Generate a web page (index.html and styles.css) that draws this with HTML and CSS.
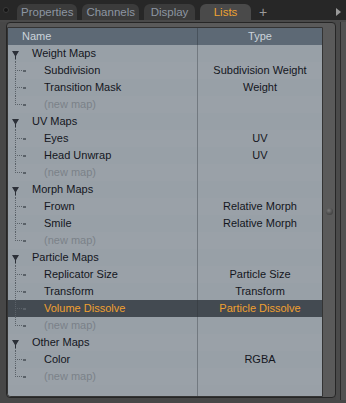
FILE: index.html
```html
<!DOCTYPE html>
<html>
<head>
<meta charset="utf-8">
<link rel="stylesheet" href="styles.css">
</head>
<body>
<div class="app">
  <div class="tabbar">
    <span class="knob"></span>
    <div class="tab">Properties</div>
    <div class="tab">Channels</div>
    <div class="tab">Display</div>
    <div class="tab active">Lists</div>
    <span class="plus">+</span>
    <span class="spacer"></span>
    <svg class="arrow" width="6" height="8" viewBox="0 0 6 8"><path d="M0 0 L5 4 L0 8 Z" fill="#9a9a9a"/></svg>
  </div>
  <div class="band"></div>
  <div class="main">
    <div class="frame">
      <div class="list">
        <div class="row head"><div class="c1">Name</div><div class="c2">Type</div></div>

        <div class="row group"><div class="c1"><span class="tree"><svg class="tri" width="7" height="11" viewBox="0 0 7 11"><path d="M0 3 H7 L4 8 V11 H3 V8 Z" fill="#2c3038"/></svg></span>Weight Maps</div><div class="c2"></div></div>
        <div class="row child"><div class="c1"><span class="tree"></span>Subdivision</div><div class="c2">Subdivision Weight</div></div>
        <div class="row child"><div class="c1"><span class="tree"></span>Transition Mask</div><div class="c2">Weight</div></div>
        <div class="row child last new"><div class="c1"><span class="tree"></span>(new map)</div><div class="c2"></div></div>

        <div class="row group"><div class="c1"><span class="tree"><svg class="tri" width="7" height="11" viewBox="0 0 7 11"><path d="M0 3 H7 L4 8 V11 H3 V8 Z" fill="#2c3038"/></svg></span>UV Maps</div><div class="c2"></div></div>
        <div class="row child"><div class="c1"><span class="tree"></span>Eyes</div><div class="c2">UV</div></div>
        <div class="row child"><div class="c1"><span class="tree"></span>Head Unwrap</div><div class="c2">UV</div></div>
        <div class="row child last new"><div class="c1"><span class="tree"></span>(new map)</div><div class="c2"></div></div>

        <div class="row group"><div class="c1"><span class="tree"><svg class="tri" width="7" height="11" viewBox="0 0 7 11"><path d="M0 3 H7 L4 8 V11 H3 V8 Z" fill="#2c3038"/></svg></span>Morph Maps</div><div class="c2"></div></div>
        <div class="row child"><div class="c1"><span class="tree"></span>Frown</div><div class="c2">Relative Morph</div></div>
        <div class="row child"><div class="c1"><span class="tree"></span>Smile</div><div class="c2">Relative Morph</div></div>
        <div class="row child last new"><div class="c1"><span class="tree"></span>(new map)</div><div class="c2"></div></div>

        <div class="row group"><div class="c1"><span class="tree"><svg class="tri" width="7" height="11" viewBox="0 0 7 11"><path d="M0 3 H7 L4 8 V11 H3 V8 Z" fill="#2c3038"/></svg></span>Particle Maps</div><div class="c2"></div></div>
        <div class="row child"><div class="c1"><span class="tree"></span>Replicator Size</div><div class="c2">Particle Size</div></div>
        <div class="row child"><div class="c1"><span class="tree"></span>Transform</div><div class="c2">Transform</div></div>
        <div class="row child selected"><div class="c1"><span class="tree"></span>Volume Dissolve</div><div class="c2">Particle Dissolve</div></div>
        <div class="row child last new"><div class="c1"><span class="tree"></span>(new map)</div><div class="c2"></div></div>

        <div class="row group"><div class="c1"><span class="tree"><svg class="tri" width="7" height="11" viewBox="0 0 7 11"><path d="M0 3 H7 L4 8 V11 H3 V8 Z" fill="#2c3038"/></svg></span>Other Maps</div><div class="c2"></div></div>
        <div class="row child"><div class="c1"><span class="tree"></span>Color</div><div class="c2">RGBA</div></div>
        <div class="row child last new"><div class="c1"><span class="tree"></span>(new map)</div><div class="c2"></div></div>

        <div class="filler"><div class="c1"></div><div class="c2"></div></div>
      </div>
      <div class="scroll"><span class="dot"></span></div>
    </div>
    <div class="rstrip"></div>
  </div>
</div>
</body>
</html>
```

FILE: styles.css
```css
* { box-sizing: border-box; }
html, body { margin: 0; padding: 0; }
body {
  width: 346px;
  height: 403px;
  overflow: hidden;
  background: #474747;
  font-family: "Liberation Sans", Arial, sans-serif;
  font-size: 11px;
}
.app { display: flex; flex-direction: column; height: 403px; }

.tabbar {
  height: 20px;
  background: #272727;
  display: flex;
  align-items: flex-end;
  padding-left: 3px;
}
.knob {
  width: 6px; height: 6px;
  border-radius: 50%;
  background: #151515;
  border: 1px solid #3a3a3a;
  align-self: center;
  margin-right: 8px;
}
.tab {
  height: 16px;
  min-width: 51px;
  padding: 0 4px;
  margin-right: 5px;
  background: #3b3b3b;
  color: #8d96a2;
  border-radius: 6px 6px 0 0;
  text-align: center;
  line-height: 16px;
  font-size: 11.5px;
}
.tab.active {
  background: #4a4a4a;
  color: #eea232;
}
.plus {
  color: #9a9a9a;
  font-size: 14px;
  line-height: 16px;
  height: 16px;
  margin-left: 3px;
}
.spacer { flex: 1; }
.arrow { align-self: center; margin-right: 4px; margin-top: 3px; }

.band { height: 2px; background: #4a4a4a; }

.main { display: flex; flex: 1; padding-left: 6px; }

.frame {
  width: 330px;
  height: 376px;
  border: 1px solid #262626;
  border-radius: 4px;
  background: #5a5a5a;
  display: flex;
  padding-top: 4px;
}
.list {
  width: 316px;
  border: 1px solid #343434;
  border-radius: 0 0 0 4px;
  background: #98a0a7;
  display: flex;
  flex-direction: column;
  overflow: hidden;
}
.row {
  height: 17px;
  display: flex;
  line-height: 17px;
  color: #14161d;
}
.row:nth-child(odd) { background: #9aa1a8; }
.row .c1, .filler .c1 {
  width: 190px;
  display: flex;
  align-items: center;
  border-right: 1px solid #727980;
  white-space: nowrap;
}
.row .c2, .filler .c2 {
  flex: 1;
  text-align: center;
  white-space: nowrap;
}
.row.head {
  background: #5d6975;
  color: #cbd3db;
}
.row.head .c1 { padding-left: 14px; border-right-color: #48525c; }

.tree {
  position: relative;
  width: 24px;
  height: 17px;
  flex: none;
}
.group .tree { width: 24px; }
.child .tree { width: 36px; }

.tri { position: absolute; left: 4px; top: 3px; }
.group .tree::before {
  content: "";
  position: absolute;
  left: 7px; top: 14px; bottom: 0;
  width: 1px;
  background: repeating-linear-gradient(to bottom, #5a6168 0 1px, transparent 1px 2px);
}
.child .tree::before {
  content: "";
  position: absolute;
  left: 7px; top: 0; bottom: 0;
  width: 1px;
  background: repeating-linear-gradient(to bottom, #5a6168 0 1px, transparent 1px 2px);
}
.child.last .tree::before { bottom: 8px; }
.child .tree::after {
  content: "";
  position: absolute;
  left: 8px; top: 8px;
  width: 10px; height: 2px;
  background:
    linear-gradient(#5a6168, #5a6168) 7px 0 / 3px 2px no-repeat,
    repeating-linear-gradient(to right, transparent 0 1px, #5a6168 1px 2px) 0 0 / 7px 1px no-repeat;
}
.new { color: #7a8189; }

.row.selected { background: #434a51; color: #f0a030; }
.row.selected .c1 { border-right-color: #3a4046; }

.filler { flex: 1; display: flex; background: #99a0a7; }

.scroll {
  flex: 1;
  display: flex;
  align-items: center;
  justify-content: center;
}
.dot {
  width: 7px; height: 7px;
  border-radius: 50%;
  background: radial-gradient(circle at 40% 35%, #777 0, #4a4a4a 60%, #3a3a3a 100%);
  margin-top: -2px;
}
.rstrip {
  width: 10px;
  height: 378px;
  background: linear-gradient(to right, #4a4a4a 0 4px, #2b2b2b 4px 5px, #525252 5px);
}
```
